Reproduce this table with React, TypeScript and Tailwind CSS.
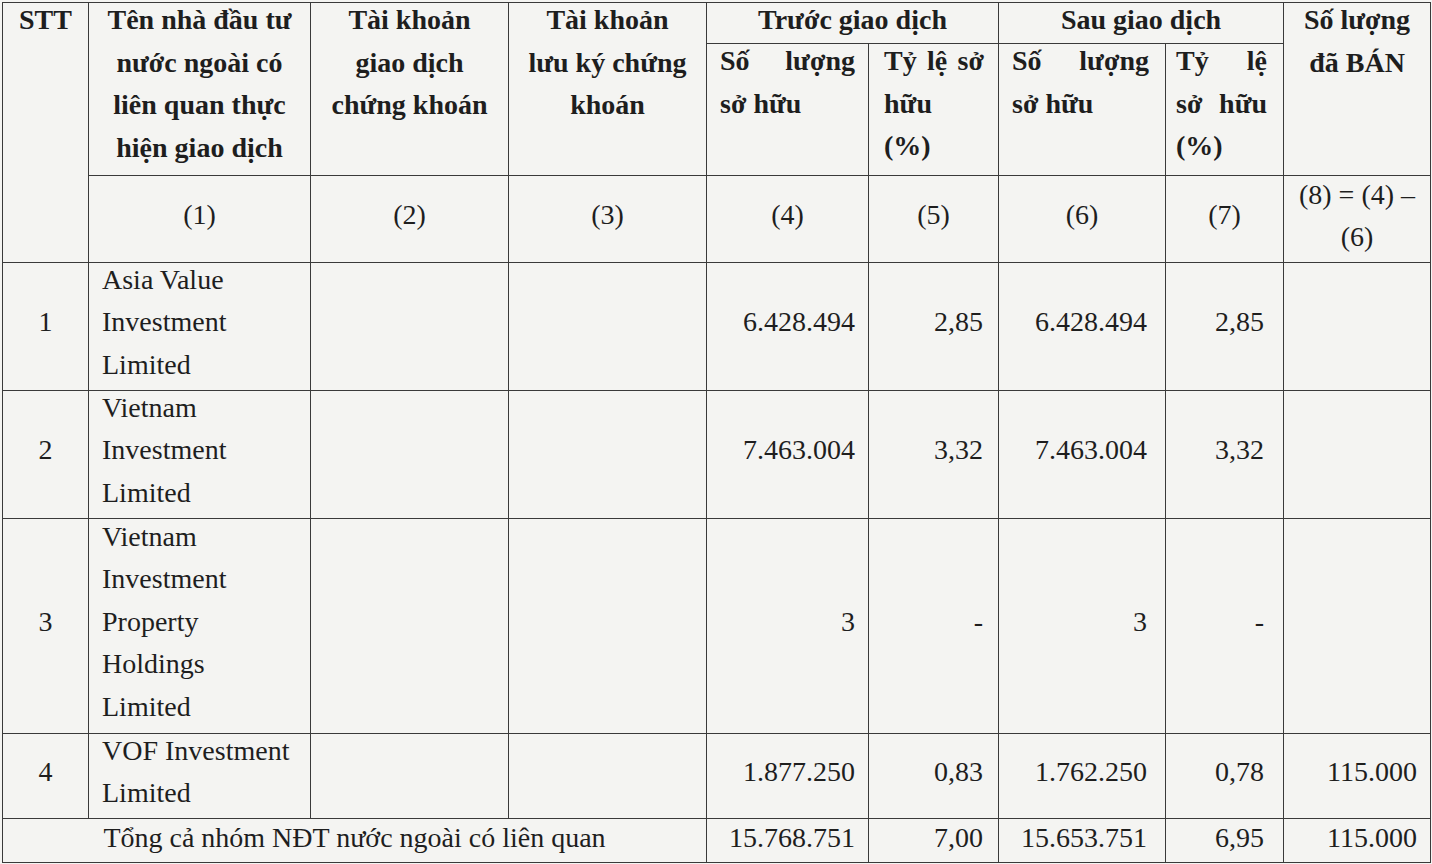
const cell = "border border-[#3a3a3a] align-middle";
const th = "border border-[#3a3a3a] align-top font-bold";

// right padding of each numeric column, as in the scan
const pads = ["pr-[13px]", "pr-[15px]", "pr-[18px]", "pr-[19px]", "pr-[13px]"];

function J({ words }: { words: string[] }) {
  // one line spread edge to edge, like justified text
  return (
    <div className="flex justify-between">
      {words.map((w) => (
        <span key={w}>{w}</span>
      ))}
    </div>
  );
}

function Num({ v, i, lift = "-mt-2" }: { v: string; i: number; lift?: string }) {
  return (
    <td className={`${cell} ${pads[i]} text-right`}>
      <div className={lift}>{v}</div>
    </td>
  );
}

const rows = [
  { stt: "1", name: ["Asia Value", "Investment", "Limited"], h: "h-[128px]", v: ["6.428.494", "2,85", "6.428.494", "2,85", ""] },
  { stt: "2", name: ["Vietnam", "Investment", "Limited"], h: "h-[128px]", v: ["7.463.004", "3,32", "7.463.004", "3,32", ""] },
  { stt: "3", name: ["Vietnam", "Investment", "Property", "Holdings", "Limited"], h: "h-[215px]", v: ["3", "-", "3", "-", ""] },
  { stt: "4", name: ["VOF Investment", "Limited"], h: "h-[85px]", v: ["1.877.250", "0,83", "1.762.250", "0,78", "115.000"] },
];

export default function App() {
  return (
    <div className="h-[864px] w-[1432px] overflow-hidden bg-[#f4f4f2] pl-[2px] pt-[2px] font-['Liberation_Serif',serif] text-[28px] leading-[42.5px] text-[#1e1e1e]">
      <table className="w-[1428px] table-fixed border-collapse">
        <colgroup>
          <col className="w-[86px]" />
          <col className="w-[222px]" />
          <col className="w-[198px]" />
          <col className="w-[198px]" />
          <col className="w-[162px]" />
          <col className="w-[130px]" />
          <col className="w-[167px]" />
          <col className="w-[118px]" />
          <col className="w-[147px]" />
        </colgroup>
        <thead>
          <tr className="h-[41px]">
            <th rowSpan={3} className={`${th} text-center`}>
              <div className="-mt-1">STT</div>
            </th>
            <th rowSpan={2} className={`${th} text-center`}>
              <div className="-mt-1">
                <div>Tên nhà đầu tư</div>
                <div>nước ngoài có</div>
                <div>liên quan thực</div>
                <div>hiện giao dịch</div>
              </div>
            </th>
            <th rowSpan={2} className={`${th} text-center`}>
              <div className="-mt-1">
                <div>Tài khoản</div>
                <div>giao dịch</div>
                <div>chứng khoán</div>
              </div>
            </th>
            <th rowSpan={2} className={`${th} text-center`}>
              <div className="-mt-1">
                <div>Tài khoản</div>
                <div>lưu ký chứng</div>
                <div>khoán</div>
              </div>
            </th>
            <th colSpan={2} className={`${th} text-center`}>
              <div className="-mt-1 leading-[41px]">Trước giao dịch</div>
            </th>
            <th colSpan={2} className={`${th} text-center`}>
              <div className="-mt-1 leading-[41px]">Sau giao dịch</div>
            </th>
            <th rowSpan={2} className={`${th} text-center`}>
              <div className="-mt-1">
                <div>Số lượng</div>
                <div>đã BÁN</div>
              </div>
            </th>
          </tr>
          <tr className="h-[132px]">
            <th className={`${th} pl-[13px] pr-[13px] text-left`}>
              <div className="-mt-1">
                <J words={["Số", "lượng"]} />
                <div>sở hữu</div>
              </div>
            </th>
            <th className={`${th} pl-[15px] pr-[14px] text-left`}>
              <div className="-mt-1">
                <J words={["Tỷ", "lệ", "sở"]} />
                <div>hữu</div>
                <div>(%)</div>
              </div>
            </th>
            <th className={`${th} pl-[13px] pr-[16px] text-left`}>
              <div className="-mt-1">
                <J words={["Số", "lượng"]} />
                <div>sở hữu</div>
              </div>
            </th>
            <th className={`${th} pl-[10px] pr-[16px] text-left`}>
              <div className="-mt-1">
                <J words={["Tỷ", "lệ"]} />
                <J words={["sở", "hữu"]} />
                <div>(%)</div>
              </div>
            </th>
          </tr>
          <tr className="h-[87px] font-normal">
            {["(1)", "(2)", "(3)", "(4)", "(5)", "(6)", "(7)"].map((t) => (
              <td key={t} className={`${cell} text-center`}>
                <div className="-mt-2">{t}</div>
              </td>
            ))}
            <td className={`${cell} text-center`}>
              <div className="-mt-1.5">
                <div>(8) = (4) –</div>
                <div>(6)</div>
              </div>
            </td>
          </tr>
        </thead>
        <tbody>
          {rows.map((r) => (
            <tr key={r.stt} className={r.h}>
              <td className={`${cell} text-center`}>
                <div className="-mt-2">{r.stt}</div>
              </td>
              <td className={`${cell} pl-[13px]`}>
                <div className="-mt-2">
                  {r.name.map((n) => (
                    <div key={n}>{n}</div>
                  ))}
                </div>
              </td>
              <td className={cell}></td>
              <td className={cell}></td>
              {r.v.map((v, i) => (
                <Num key={i} i={i} v={v} />
              ))}
            </tr>
          ))}
          <tr className="h-[44px]">
            <td colSpan={4} className={`${cell} text-center`}>
              <div className="-mt-1.5 leading-[40px]">Tổng cả nhóm NĐT nước ngoài có liên quan</div>
            </td>
            {["15.768.751", "7,00", "15.653.751", "6,95", "115.000"].map((v, i) => (
              <Num key={i} i={i} v={v} lift="-mt-1.5 leading-[40px]" />
            ))}
          </tr>
        </tbody>
      </table>
    </div>
  );
}
